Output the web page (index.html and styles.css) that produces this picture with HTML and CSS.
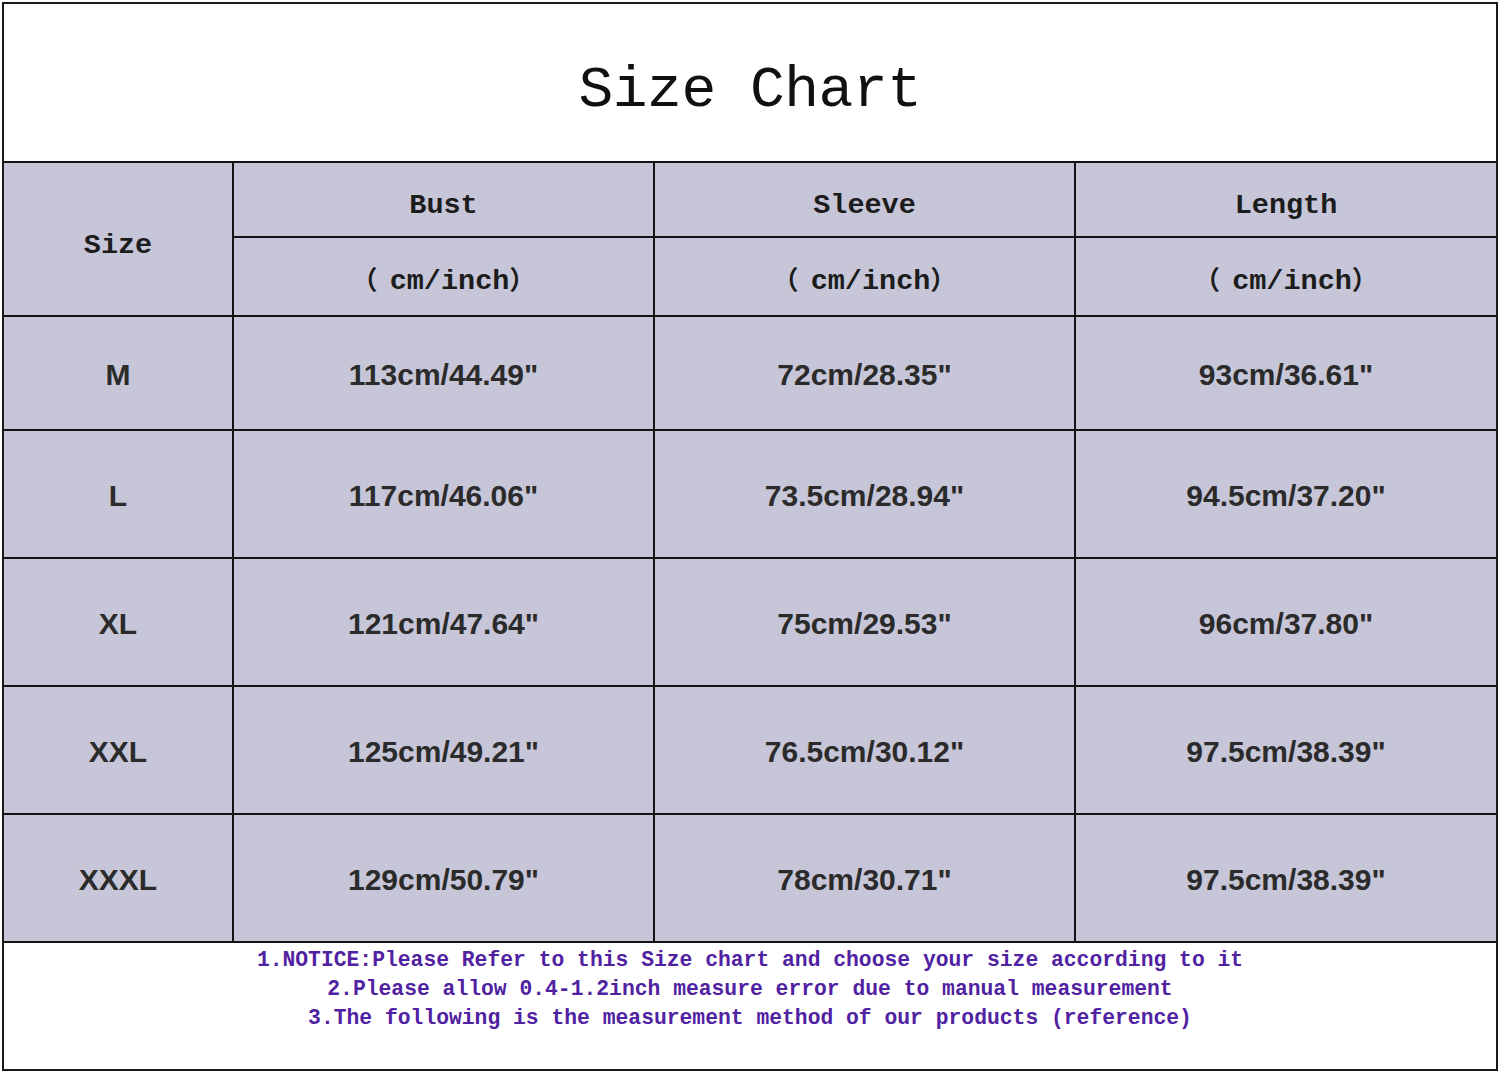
FILE: index.html
```html
<!DOCTYPE html>
<html>
<head>
<meta charset="utf-8">
<link rel="stylesheet" href="styles.css">
</head>
<body>
<div class="chart">
  <div class="title">Size Chart</div>
  <table class="grid">
    <colgroup>
      <col class="c-size"><col class="c-val"><col class="c-val"><col class="c-val">
    </colgroup>
    <tr class="h1">
      <th rowspan="2" class="head">Size</th>
      <th class="head">Bust</th>
      <th class="head">Sleeve</th>
      <th class="head">Length</th>
    </tr>
    <tr class="h2">
      <th class="head"><span class="par open">（</span>cm/inch<span class="par close">）</span></th>
      <th class="head"><span class="par open">（</span>cm/inch<span class="par close">）</span></th>
      <th class="head"><span class="par open">（</span>cm/inch<span class="par close">）</span></th>
    </tr>
    <tr class="r-first">
      <td>M</td><td>113cm/44.49"</td><td>72cm/28.35"</td><td>93cm/36.61"</td>
    </tr>
    <tr class="r">
      <td>L</td><td>117cm/46.06"</td><td>73.5cm/28.94"</td><td>94.5cm/37.20"</td>
    </tr>
    <tr class="r">
      <td>XL</td><td>121cm/47.64"</td><td>75cm/29.53"</td><td>96cm/37.80"</td>
    </tr>
    <tr class="r">
      <td>XXL</td><td>125cm/49.21"</td><td>76.5cm/30.12"</td><td>97.5cm/38.39"</td>
    </tr>
    <tr class="r">
      <td>XXXL</td><td>129cm/50.79"</td><td>78cm/30.71"</td><td>97.5cm/38.39"</td>
    </tr>
  </table>
  <div class="notes">
    <p>1.NOTICE:Please Refer to this Size chart and choose your size according to it</p>
    <p>2.Please allow 0.4-1.2inch measure error due to manual measurement</p>
    <p>3.The following is the measurement method of our products (reference)</p>
  </div>
</div>
</body>
</html>
```

FILE: styles.css
```css
html, body {
  margin: 0;
  padding: 0;
  background: #ffffff;
}

.chart {
  margin: 2px 0 0 2px;
  width: 1496px;
  height: 1069px;
  box-sizing: border-box;
  border: 2px solid #1a1a1a;
  display: flex;
  flex-direction: column;
  background: #ffffff;
}

.title {
  height: 157px;
  display: flex;
  align-items: center;
  justify-content: center;
  font-family: "Liberation Mono", "DejaVu Sans Mono", monospace;
  font-size: 58px;
  letter-spacing: -0.5px;
  color: #111111;
  padding-top: 16px;
  box-sizing: border-box;
}

.grid {
  width: 100%;
  border-collapse: collapse;
  table-layout: fixed;
  background: #c6c6d8;
}

.c-size { width: 229px; }
.c-val { width: 421px; }

.grid th,
.grid td {
  border: 2px solid #141414;
  text-align: center;
  vertical-align: middle;
  padding: 0;
}

.grid tr th:first-child,
.grid tr td:first-child { border-left: none; }
.grid tr th:last-child,
.grid tr td:last-child { border-right: none; }

.head {
  font-family: "Liberation Mono", "Noto Sans CJK SC", monospace;
  font-weight: bold;
  font-size: 28.5px;
  color: #1c1c1c;
}

.par {
  font-family: "Noto Sans CJK SC", sans-serif;
  font-weight: bold;
  font-size: 26px;
}

.par.open { margin-right: 12px; }
.par.close { margin-left: 0; }

.h1 { height: 75px; }
.h2 { height: 79px; }
.h2 .head { padding-top: 4px; }
.h1 .head { padding-top: 12px; }

.r-first { height: 114px; }
.r { height: 128px; }

.grid td {
  font-family: "Liberation Sans", Arial, sans-serif;
  font-weight: bold;
  font-size: 30px;
  color: #2b2b2b;
  padding-top: 3px;
}

.notes {
  flex: 1;
  padding-top: 3px;
  font-family: "Liberation Mono", "DejaVu Sans Mono", monospace;
  font-size: 21.35px;
  font-weight: bold;
  color: #5022a2;
  text-align: center;
}

.notes p {
  margin: 0;
  line-height: 29px;
}
```
